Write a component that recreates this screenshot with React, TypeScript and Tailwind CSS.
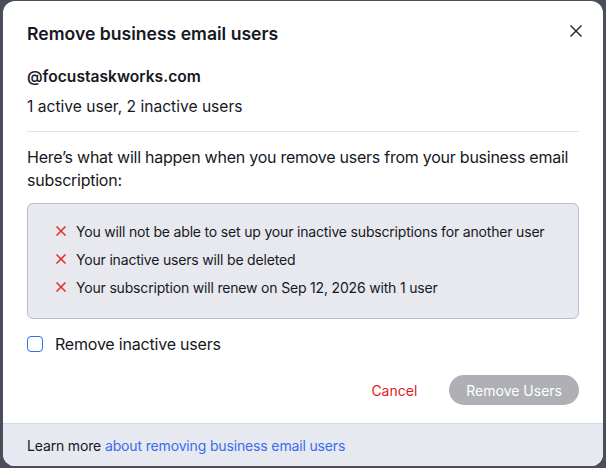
import React from "react";

const font = { fontFamily: "Inter, 'Noto Sans', sans-serif" };

function XIcon() {
  return (
    <svg width="10" height="10" viewBox="0 0 10 10" className="shrink-0">
      <path d="M1 1L9 9M9 1L1 9" stroke="#e62828" strokeWidth="1.5" strokeLinecap="square" />
    </svg>
  );
}

export default function App() {
  return (
    <div className="w-[606px] h-[468px] bg-[#4a4e5b] pt-px px-[3px] overflow-hidden" style={font}>
      <div className="w-[600px] h-[465px] bg-white rounded-[12px] overflow-hidden flex flex-col">
        <div className="flex-1 px-6 pt-[21px]">
          <div className="flex items-center justify-between h-6">
            <h1 className="text-[17.6px] leading-6 font-semibold text-[#161823]">
              Remove business email users
            </h1>
            <button className="w-6 h-6 flex items-center justify-center -mr-[9px] -mt-[6px]">
              <svg width="14" height="14" viewBox="0 0 14 14">
                <path d="M1.5 1.5L12.5 12.5M12.5 1.5L1.5 12.5" stroke="#1d1f2b" strokeWidth="1.4" />
              </svg>
            </button>
          </div>
          <div className="mt-5 text-[15.6px] leading-[22px] font-semibold text-[#161823]">@focustaskworks.com</div>
          <div className="mt-2 text-[15.6px] leading-[22px] text-[#161823]">1 active user, 2 inactive users</div>
          <div className="mt-[13px] h-px bg-[#dfe3ea]" />
          <p className="mt-[14px] text-[16px] leading-[23px] text-[#161823] tracking-[-0.25px]">
            Here’s what will happen when you remove users from your business email subscription:
          </p>
          <div className="mt-[11px] bg-[#e7e9ef] border border-[#b8bccd] rounded-[6px] pt-[13px] pb-[17px] pl-[28px]">
            {[
              "You will not be able to set up your inactive subscriptions for another user",
              "Your inactive users will be deleted",
              "Your subscription will renew on Sep 12, 2026 with 1 user",
            ].map((t) => (
              <div key={t} className="flex items-center gap-[10px] h-7 text-[14px] text-[#161823] tracking-[-0.18px]">
                <XIcon />
                <span>{t}</span>
              </div>
            ))}
          </div>
          <label className="mt-[13px] flex items-center gap-3 h-6">
            <span className="w-4 h-4 rounded-[4px] border border-[#2f6bf3] bg-white" />
            <span className="text-[16px] text-[#161823] tracking-[-0.2px]">Remove inactive users</span>
          </label>
          <div className="mt-[19px] flex items-center justify-end gap-8">
            <button className="text-[14px] text-[#e0201f]">Cancel</button>
            <button className="h-[30px] px-[17px] rounded-full bg-[#aeb0b6] text-white text-[14px]">
              Remove Users
            </button>
          </div>
        </div>
        <div className="h-[43px] shrink-0 bg-[#e6e9ef] border-t border-[#d5d9e0] px-6 flex items-center text-[14px] tracking-[-0.15px]">
          <span className="text-[#161823]">Learn more&nbsp;</span>
          <a className="text-[#3a6cf0]">about removing business email users</a>
        </div>
      </div>
    </div>
  );
}
